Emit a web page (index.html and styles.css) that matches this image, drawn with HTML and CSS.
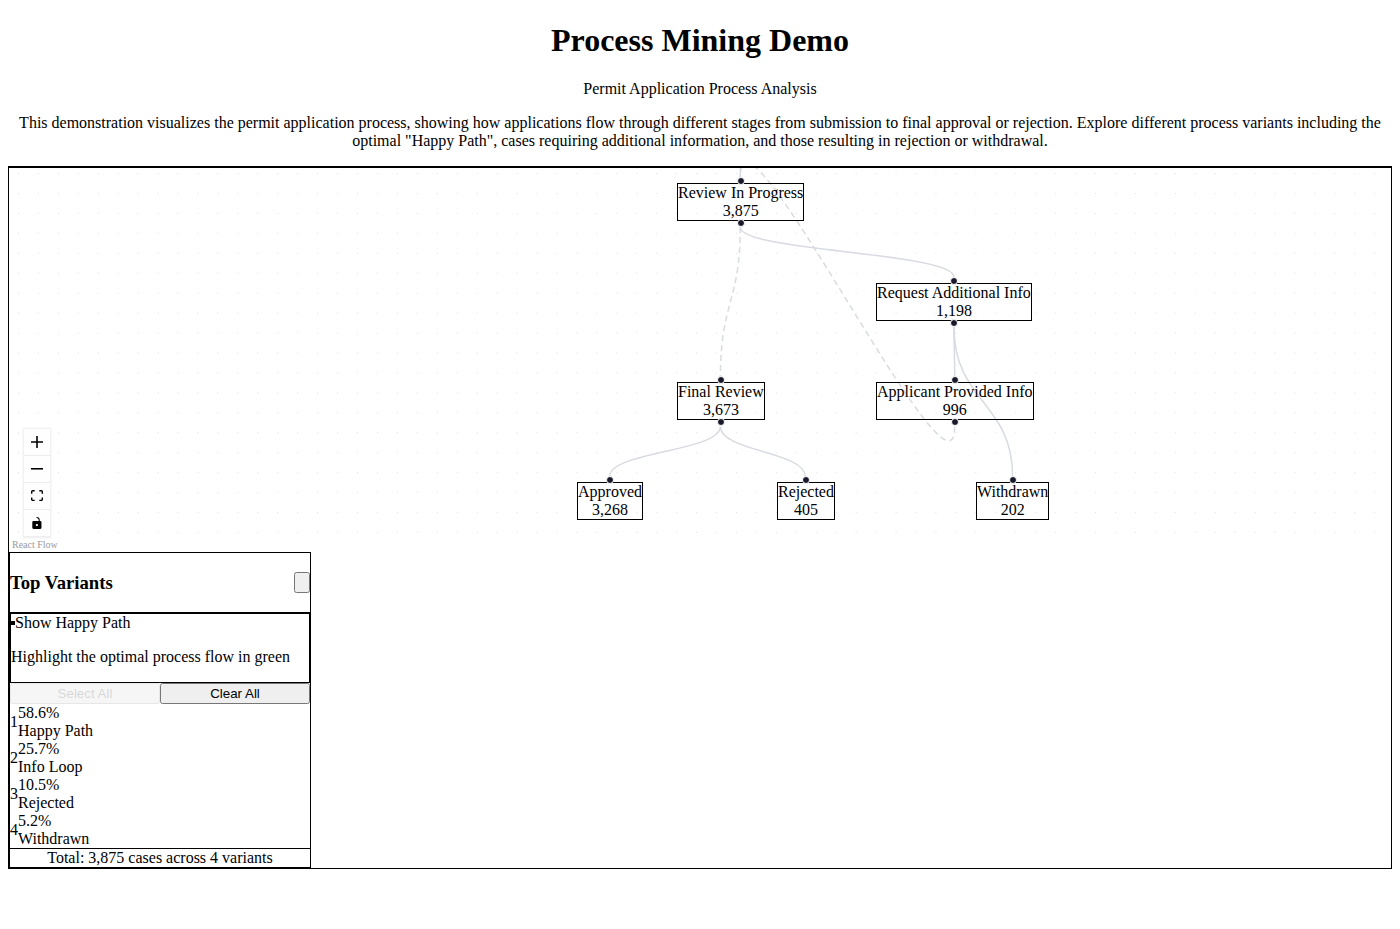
FILE: index.html
```
<!DOCTYPE html>
<html lang="en">
<head>
<meta charset="utf-8">
<title>Process Mining Demo</title>
<link rel="stylesheet" href="styles.css">
</head>
<body>
<header class="intro">
  <h1>Process Mining Demo</h1>
  <p>Permit Application Process Analysis</p>
  <p>This demonstration visualizes the permit application process, showing how applications flow through different stages from submission to final approval or rejection. Explore different process variants including the optimal "Happy Path", cases requiring additional information, and those resulting in rejection or withdrawal.</p>
</header>
<main class="explorer">
  <section class="canvas" aria-label="Process graph">
    <svg class="dots" aria-hidden="true">
      <defs>
        <pattern id="grid" x="9" y="5" width="19.945" height="19.945" patternUnits="userSpaceOnUse">
          <circle cx="0.5" cy="0.5" r="0.5"/>
        </pattern>
      </defs>
      <rect width="100%" height="100%" fill="url(#grid)"/>
    </svg>
    <div class="graph">
      <svg class="edges" width="1" height="1" aria-hidden="true">
        <path d="M42 -41C42 -16 40.3 -16 40.3 9"/>
        <path d="M40.3 59C40.3 84 254 84 254 109"/>
        <path class="dashed" d="M40.3 59C40.3 134 20.4 134 20.4 209"/>
        <path d="M20.4 258.5C20.4 283.5 -90.4 283.5 -90.4 308.5"/>
        <path d="M20.4 258.5C20.4 283.5 105.2 283.5 105.2 308.5"/>
        <path d="M254 159C254 184 254.7 184 254.7 209"/>
        <path d="M254 159C254 234 312.6 234 312.6 308.5"/>
        <path class="dashed" d="M254.7 258.5C254.7 357 40.3 -90 40.3 9"/>
      </svg>
      <div class="node review"><i class="handle in"></i><div>Review In Progress</div><div>3,875</div><i class="handle out"></i></div>
      <div class="node request"><i class="handle in"></i><div>Request Additional Info</div><div>1,198</div><i class="handle out"></i></div>
      <div class="node final"><i class="handle in"></i><div>Final Review</div><div>3,673</div><i class="handle out"></i></div>
      <div class="node provided"><i class="handle in"></i><div>Applicant Provided Info</div><div>996</div><i class="handle out"></i></div>
      <div class="node approved"><i class="handle in"></i><div>Approved</div><div>3,268</div></div>
      <div class="node rejected"><i class="handle in"></i><div>Rejected</div><div>405</div></div>
      <div class="node withdrawn"><i class="handle in"></i><div>Withdrawn</div><div>202</div></div>
    </div>
    <div class="controls">
      <button type="button" aria-label="Zoom in"><svg viewBox="0 0 32 32"><path d="M32 18.133H18.133V32h-4.266V18.133H0v-4.266h13.867V0h4.266v13.867H32z"/></svg></button>
      <button type="button" aria-label="Zoom out"><svg viewBox="0 0 32 5"><path d="M0 0h32v4.2H0z"/></svg></button>
      <button type="button" aria-label="Fit view"><svg viewBox="0 0 32 30"><path d="M3.692 4.63c0-.53.4-.938.939-.938h5.215V0H4.708C2.13 0 0 2.054 0 4.63v5.216h3.692V4.631zM27.354 0h-5.2v3.692h5.17c.53 0 .984.4.984.939v5.215H32V4.631A4.624 4.624 0 0027.354 0zm.954 24.83c0 .532-.4.94-.939.94h-5.215v3.768h5.215c2.577 0 4.631-2.13 4.631-4.707v-5.139h-3.692v5.139zm-23.677.94c-.531 0-.939-.4-.939-.94v-5.138H0v5.139c0 2.577 2.13 4.707 4.708 4.707h5.138V25.77H4.631z"/></svg></button>
      <button type="button" aria-label="Toggle interactivity"><svg viewBox="0 0 25 32"><path d="M21.333 10.667H19.81V7.619C19.81 3.429 16.38 0 12.19 0c-4.114 1.828-1.37 2.133.305 2.438 1.676.305 4.42 2.59 4.42 5.181v3.048H3.047A3.056 3.056 0 000 13.714v15.238A3.056 3.056 0 003.048 32h18.285a3.056 3.056 0 003.048-3.048V13.714a3.056 3.056 0 00-3.048-3.047zM12.19 24.533a3.056 3.056 0 01-3.047-3.047 3.056 3.056 0 013.047-3.048 3.056 3.056 0 013.048 3.048 3.056 3.056 0 01-3.048 3.047z"/></svg></button>
    </div>
    <a class="attribution" href="#">React Flow</a>
  </section>
  <aside class="panel">
    <div class="panel-header">
      <h3>Top Variants</h3>
      <button type="button" class="collapse" aria-label="Collapse panel"></button>
    </div>
    <div class="happy">
      <div class="toggle">
        <input type="checkbox" id="happy-path">
        <label for="happy-path">Show Happy Path</label>
      </div>
      <p>Highlight the optimal process flow in green</p>
    </div>
    <div class="actions">
      <button type="button" disabled>Select All</button>
      <button type="button">Clear All</button>
    </div>
    <div class="variants">
      <div class="variant"><div>1</div><div><div>58.6%</div><div>Happy Path</div></div></div>
      <div class="variant"><div>2</div><div><div>25.7%</div><div>Info Loop</div></div></div>
      <div class="variant"><div>3</div><div><div>10.5%</div><div>Rejected</div></div></div>
      <div class="variant"><div>4</div><div><div>5.2%</div><div>Withdrawn</div></div></div>
    </div>
    <div class="total">Total: 3,875 cases across 4 variants</div>
  </aside>
</main>
</body>
</html>
```
FILE: styles.css
```
body {
  margin: 0 8px;
  font-family: "Liberation Serif", serif;
  font-size: 16px;
  line-height: 18px;
  color: #000;
  background: #fff;
}
.intro { text-align: center; }
.intro h1 {
  margin: 22px 0;
  line-height: 36px;
}
.explorer { border: 1px solid #000; }

.canvas {
  position: relative;
  height: 384px;
  overflow: hidden;
  border-top: 1px solid #000;
}
.dots {
  position: absolute;
  inset: 0;
  width: 100%;
  height: 100%;
}
.dots circle { fill: #d8d8de; }
.graph {
  position: absolute;
  top: 0;
  left: 50%;
}
.edges {
  position: absolute;
  top: 0;
  left: 0;
  overflow: visible;
}
.edges path {
  fill: none;
  stroke: #d9dbe2;
  stroke-width: 1.5;
}
.edges .dashed { stroke-dasharray: 6 4; }

.node {
  position: absolute;
  border: 1px solid #000;
  text-align: center;
  white-space: nowrap;
}
.review { left: -23px; top: 15px; }
.request { left: 176px; top: 115px; }
.final { left: -23px; top: 214px; }
.provided { left: 176px; top: 214px; }
.approved { left: -123px; top: 314px; }
.rejected { left: 77px; top: 314px; }
.withdrawn { left: 276px; top: 314px; }

.handle {
  position: absolute;
  left: 50%;
  width: 6px;
  height: 6px;
  border: 1px solid #fff;
  border-radius: 50%;
  background: #1a192b;
  transform: translateX(-50%);
}
.in { top: -7px; }
.out { bottom: -7px; }

.controls {
  position: absolute;
  left: 15px;
  bottom: 15px;
  display: flex;
  flex-direction: column;
  box-shadow: 0 0 2px 1px rgba(0, 0, 0, 0.08);
}
.controls button {
  display: flex;
  align-items: center;
  justify-content: center;
  box-sizing: border-box;
  width: 26px;
  height: 27px;
  padding: 4px;
  border: 0;
  border-bottom: 1px solid #eee;
  background: #fefefe;
}
.controls svg {
  width: 100%;
  max-width: 12px;
  max-height: 12px;
}
.attribution {
  position: absolute;
  left: 0;
  bottom: 0;
  padding: 2px 3px;
  font-size: 10px;
  line-height: 11px;
  color: #999;
  text-decoration: none;
}

.panel {
  width: 300px;
  border: 1px solid #000;
}
.panel-header {
  display: flex;
  align-items: center;
  justify-content: space-between;
  border-bottom: 1px solid #000;
}
.panel-header h3 { line-height: 22px; }
.collapse {
  width: 16px;
  height: 21px;
}
.happy {
  display: flow-root;
  border: 1px solid #000;
}
.toggle {
  display: flex;
  align-items: center;
}
.toggle input {
  appearance: none;
  width: 4px;
  height: 4px;
  margin: 0;
  background: #000;
}
.actions { display: flex; }
.actions button {
  flex: 1;
  height: 21px;
}
.actions button:disabled { opacity: 0.5; }
.variant {
  display: flex;
  align-items: center;
}
.total {
  border-top: 1px solid #000;
  text-align: center;
}
```
